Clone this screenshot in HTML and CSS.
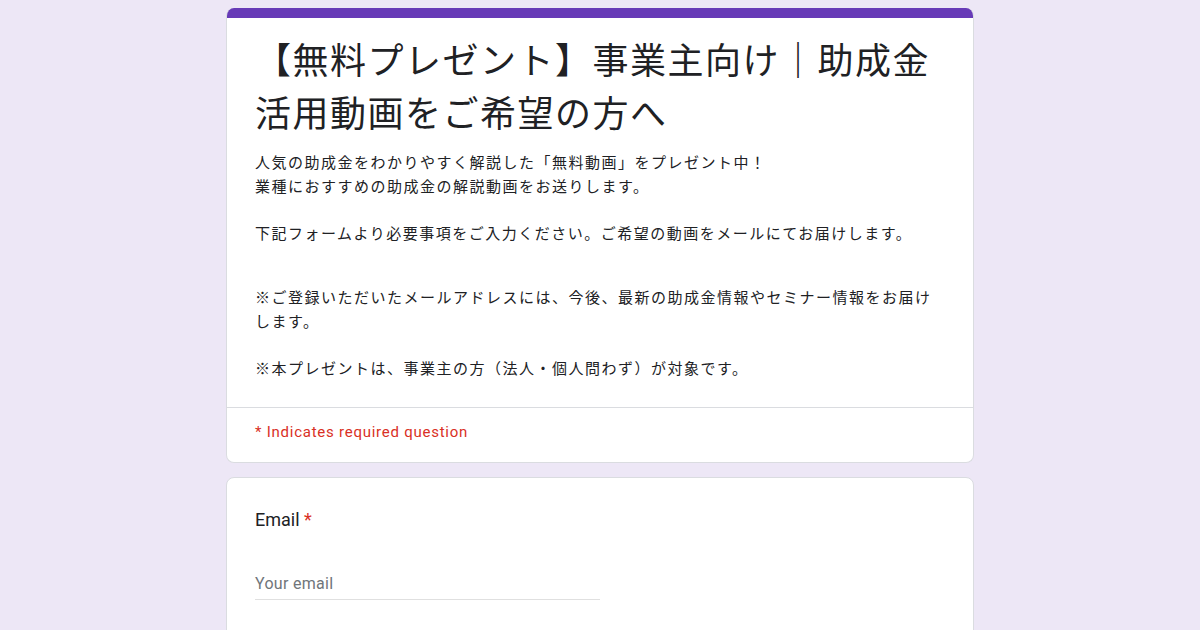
FILE: index.html
```html
<!DOCTYPE html>
<html lang="ja">
<head>
<meta charset="utf-8">
<title>【無料プレゼント】事業主向け｜助成金活用動画をご希望の方へ</title>
<link rel="stylesheet" href="styles.css">
</head>
<body>
<div class="page">
  <div class="card header-card">
    <div class="top-bar"></div>
    <div class="header-body">
      <h1 class="title">【無料プレゼント】事業主向け｜助成金活用動画をご希望の方へ</h1>
      <div class="desc">
        <p class="line">人気の助成金をわかりやすく解説した「無料動画」をプレゼント中！</p>
        <p class="line">業種におすすめの助成金の解説動画をお送りします。</p>
        <p class="line blank"></p>
        <p class="line">下記フォームより必要事項をご入力ください。ご希望の動画をメールにてお届けします。</p>
        <div class="spacer"></div>
        <p class="line">※ご登録いただいたメールアドレスには、今後、最新の助成金情報やセミナー情報をお届けします。</p>
        <p class="line blank"></p>
        <p class="line">※本プレゼントは、事業主の方（法人・個人問わず）が対象です。</p>
      </div>
    </div>
    <div class="header-foot">* Indicates required question</div>
  </div>

  <div class="card question-card">
    <div class="q-label">Email <span class="req">*</span></div>
    <div class="q-input">Your email</div>
  </div>
</div>
</body>
</html>
```

FILE: styles.css
```css
html, body {
  margin: 0;
  padding: 0;
  background: #ede7f6;
}
body {
  font-family: "Noto Sans CJK JP", "Noto Sans", sans-serif;
  color: #202124;
}
.page {
  width: 748px;
  margin: 0 auto;
  padding-top: 8px;
}
.card {
  background: #fff;
  border: 1px solid #dadce0;
  border-radius: 8px;
  overflow: hidden;
}
.header-card {
  border-top: none;
}
.top-bar {
  height: 10px;
  background: #673ab7;
  margin: 0 -1px;
}
.header-body {
  padding: 14px 28px 28px;
  border-bottom: 1px solid #dadce0;
}
.title {
  margin: 0;
  font-weight: 400;
  font-size: 36px;
  letter-spacing: 1.5px;
  line-height: 53px;
  color: #202124;
}
.desc {
  margin-top: 12px;
  font-size: 15px;
  letter-spacing: 1.5px;
  line-height: 23.5px;
}
.line {
  margin: 0;
}
.blank {
  height: 23.5px;
}
.spacer {
  height: 41px;
}
.header-foot {
  padding: 14px 28px 20px;
  font-family: Roboto, "Liberation Sans", sans-serif;
  font-size: 15px;
  letter-spacing: 0.75px;
  line-height: 20px;
  color: #d93025;
}
.question-card {
  margin-top: 14px;
  padding: 30px 28px 40px;
}
.q-label {
  font-family: Roboto, "Liberation Sans", sans-serif;
  font-size: 18px;
  line-height: 24px;
  color: #202124;
}
.req {
  color: #d93025;
}
.q-input {
  margin-top: 42px;
  width: 345px;
  font-family: Roboto, "Liberation Sans", sans-serif;
  font-size: 16px;
  letter-spacing: 0.3px;
  line-height: 20px;
  color: #70757a;
  padding-bottom: 5px;
  border-bottom: 1px solid #e0e0e0;
}
```
